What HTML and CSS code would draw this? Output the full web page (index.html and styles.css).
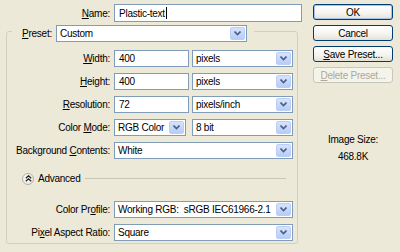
FILE: index.html
```html
<!DOCTYPE html>
<html>
<head>
<meta charset="utf-8">
<link rel="stylesheet" href="styles.css">
</head>
<body>
<div class="dialog">
  <div class="main">
    <div class="row name-row">
      <span class="lbl"><u>N</u>ame:</span>
      <div class="input name-input">Plastic-text<span class="caret"></span></div>
    </div>
    <fieldset class="group">
      <legend class="legend">
        <span class="lbl-preset"><u>P</u>reset:</span>
        <div class="select preset-select"><span class="val">Custom</span><span class="arrow"><svg width="7" height="5" viewBox="0 0 7 5"><path d="M0.5 0.5 L3.5 3.5 L6.5 0.5" fill="none" stroke="#4d6185" stroke-width="1.6"/></svg></span></div>
      </legend>
      <div class="row first">
        <span class="lbl"><u>W</u>idth:</span>
        <div class="input num">400</div>
        <div class="select unit"><span class="val">pixels</span><span class="arrow"><svg width="7" height="5" viewBox="0 0 7 5"><path d="M0.5 0.5 L3.5 3.5 L6.5 0.5" fill="none" stroke="#4d6185" stroke-width="1.6"/></svg></span></div>
      </div>
      <div class="row">
        <span class="lbl"><u>H</u>eight:</span>
        <div class="input num">400</div>
        <div class="select unit"><span class="val">pixels</span><span class="arrow"><svg width="7" height="5" viewBox="0 0 7 5"><path d="M0.5 0.5 L3.5 3.5 L6.5 0.5" fill="none" stroke="#4d6185" stroke-width="1.6"/></svg></span></div>
      </div>
      <div class="row">
        <span class="lbl"><u>R</u>esolution:</span>
        <div class="input num">72</div>
        <div class="select unit"><span class="val">pixels/inch</span><span class="arrow"><svg width="7" height="5" viewBox="0 0 7 5"><path d="M0.5 0.5 L3.5 3.5 L6.5 0.5" fill="none" stroke="#4d6185" stroke-width="1.6"/></svg></span></div>
      </div>
      <div class="row">
        <span class="lbl">Color <u>M</u>ode:</span>
        <div class="select mode"><span class="val">RGB Color</span><span class="arrow"><svg width="7" height="5" viewBox="0 0 7 5"><path d="M0.5 0.5 L3.5 3.5 L6.5 0.5" fill="none" stroke="#4d6185" stroke-width="1.6"/></svg></span></div>
        <div class="select unit"><span class="val">8 bit</span><span class="arrow"><svg width="7" height="5" viewBox="0 0 7 5"><path d="M0.5 0.5 L3.5 3.5 L6.5 0.5" fill="none" stroke="#4d6185" stroke-width="1.6"/></svg></span></div>
      </div>
      <div class="row">
        <span class="lbl">Background <u>C</u>ontents:</span>
        <div class="select wide"><span class="val">White</span><span class="arrow"><svg width="7" height="5" viewBox="0 0 7 5"><path d="M0.5 0.5 L3.5 3.5 L6.5 0.5" fill="none" stroke="#4d6185" stroke-width="1.6"/></svg></span></div>
      </div>
      <div class="adv-row">
        <span class="adv-icon"><svg width="7" height="7" viewBox="0 0 7 7"><path d="M0.8 3.2 L3.5 0.8 L6.2 3.2 M0.8 6.2 L3.5 3.8 L6.2 6.2" fill="none" stroke="#222" stroke-width="1.3"/></svg></span>
        <span class="adv-text">Advanced</span>
        <span class="adv-line"></span>
      </div>
      <div class="row profile">
        <span class="lbl">Color Pr<u>o</u>file:</span>
        <div class="select wide"><span class="val">Working RGB:&nbsp; sRGB IEC61966-2.1</span><span class="arrow"><svg width="7" height="5" viewBox="0 0 7 5"><path d="M0.5 0.5 L3.5 3.5 L6.5 0.5" fill="none" stroke="#4d6185" stroke-width="1.6"/></svg></span></div>
      </div>
      <div class="row">
        <span class="lbl">Pi<u>x</u>el Aspect Ratio:</span>
        <div class="select wide"><span class="val">Square</span><span class="arrow"><svg width="7" height="5" viewBox="0 0 7 5"><path d="M0.5 0.5 L3.5 3.5 L6.5 0.5" fill="none" stroke="#4d6185" stroke-width="1.6"/></svg></span></div>
      </div>
    </fieldset>
  </div>
  <div class="side">
    <div class="btn default">OK</div>
    <div class="btn">Cancel</div>
    <div class="btn"><u>S</u>ave Preset...</div>
    <div class="btn disabled"><u>D</u>elete Preset...</div>
    <div class="size">
      <div class="size-label">Image Size:</div>
      <div class="size-val">468.8K</div>
    </div>
  </div>
</div>
</body>
</html>
```
FILE: styles.css
```css
* { box-sizing: border-box; }
html, body { margin: 0; padding: 0; }
body {
  background: #ece9d8;
  font-family: "Liberation Sans", Arial, sans-serif;
  font-size: 10px;
  letter-spacing: -0.25px;
  color: #000;
  width: 400px;
  height: 252px;
  overflow: hidden;
}
u { text-decoration: underline; text-underline-offset: 1px; }
.dialog {
  display: flex;
  gap: 8px;
  padding-top: 4px;
}
.main {
  width: 305px;
  display: flex;
  flex-direction: column;
}
.row {
  display: flex;
  align-items: center;
  height: 17px;
  margin-top: 6px;
}
.lbl {
  width: 103px;
  flex: none;
  text-align: right;
  margin-right: 4px;
  white-space: nowrap;
}
.name-row { margin-top: 0; height: 18px; }
.name-row .lbl { width: 110px; }
.input, .select {
  height: 100%;
  border: 1px solid #7f9db9;
  background: #fff;
  display: flex;
  align-items: center;
  white-space: nowrap;
  overflow: hidden;
}
.input { padding-left: 4px; }
.name-input { width: 188px; }
.caret {
  display: inline-block;
  width: 1px;
  height: 12px;
  background: #000;
  margin-left: 1px;
}
.num { width: 75px; margin-right: 3px; }
.select .val { flex: 1; padding-left: 3px; overflow: hidden; }
.select .arrow {
  width: 15px;
  height: calc(100% - 2px);
  margin-right: 1px;
  border: 1px solid #bccdf7;
  border-radius: 2px;
  background: linear-gradient(#d6e3fd, #b7ccf7);
  display: flex;
  align-items: center;
  justify-content: center;
}
.unit { width: 101px; }
.mode { width: 72px; margin-right: 6px; }
.wide { width: 179px; }
.group {
  margin: 3px 0 0 6px;
  width: 292px;
  padding: 0 0 2px 0;
  border: 1px solid #d0d0bf;
  border-radius: 3px;
  min-width: 0;
}
.legend {
  margin-left: 5px;
  padding: 0 7px 0 10px;
  height: 13px;
  display: flex;
  align-items: flex-start;
}
.lbl-preset { margin-right: 4px; line-height: 17px; white-space: nowrap; }
.preset-select { width: 191px; height: 17px; flex: none; }
.row.first { margin-top: 12px; }
.adv-row {
  display: flex;
  align-items: center;
  height: 17px;
  margin-top: 11px;
  padding-left: 15px;
  margin-right: 11px;
}
.adv-icon {
  width: 12px;
  height: 12px;
  border-radius: 50%;
  border: 1px solid #b5b2a3;
  background: radial-gradient(circle at 40% 35%, #ffffff, #e6e3d6);
  display: flex;
  align-items: center;
  justify-content: center;
  margin-right: 4px;
}
.adv-text { margin-right: 5px; }
.adv-line { flex: 1; height: 1px; background: #c8c5b5; }
.row.profile { margin-top: 14px; }
.side {
  width: 80px;
  display: flex;
  flex-direction: column;
}
.btn {
  height: 16px;
  margin-bottom: 5px;
  border: 1px solid #003c74;
  border-radius: 3px;
  background: linear-gradient(#ffffff, #f4f3ee 60%, #e3e1d6);
  display: flex;
  align-items: center;
  justify-content: center;
}
.btn.default { box-shadow: inset 0 0 0 1px #a9c3ef; }
.btn.disabled {
  border-color: #c9c7ba;
  background: #f5f4ea;
  color: #aca899;
}
.size {
  margin-top: 46px;
  text-align: center;
}
.size-val { margin-top: 6px; }
```
